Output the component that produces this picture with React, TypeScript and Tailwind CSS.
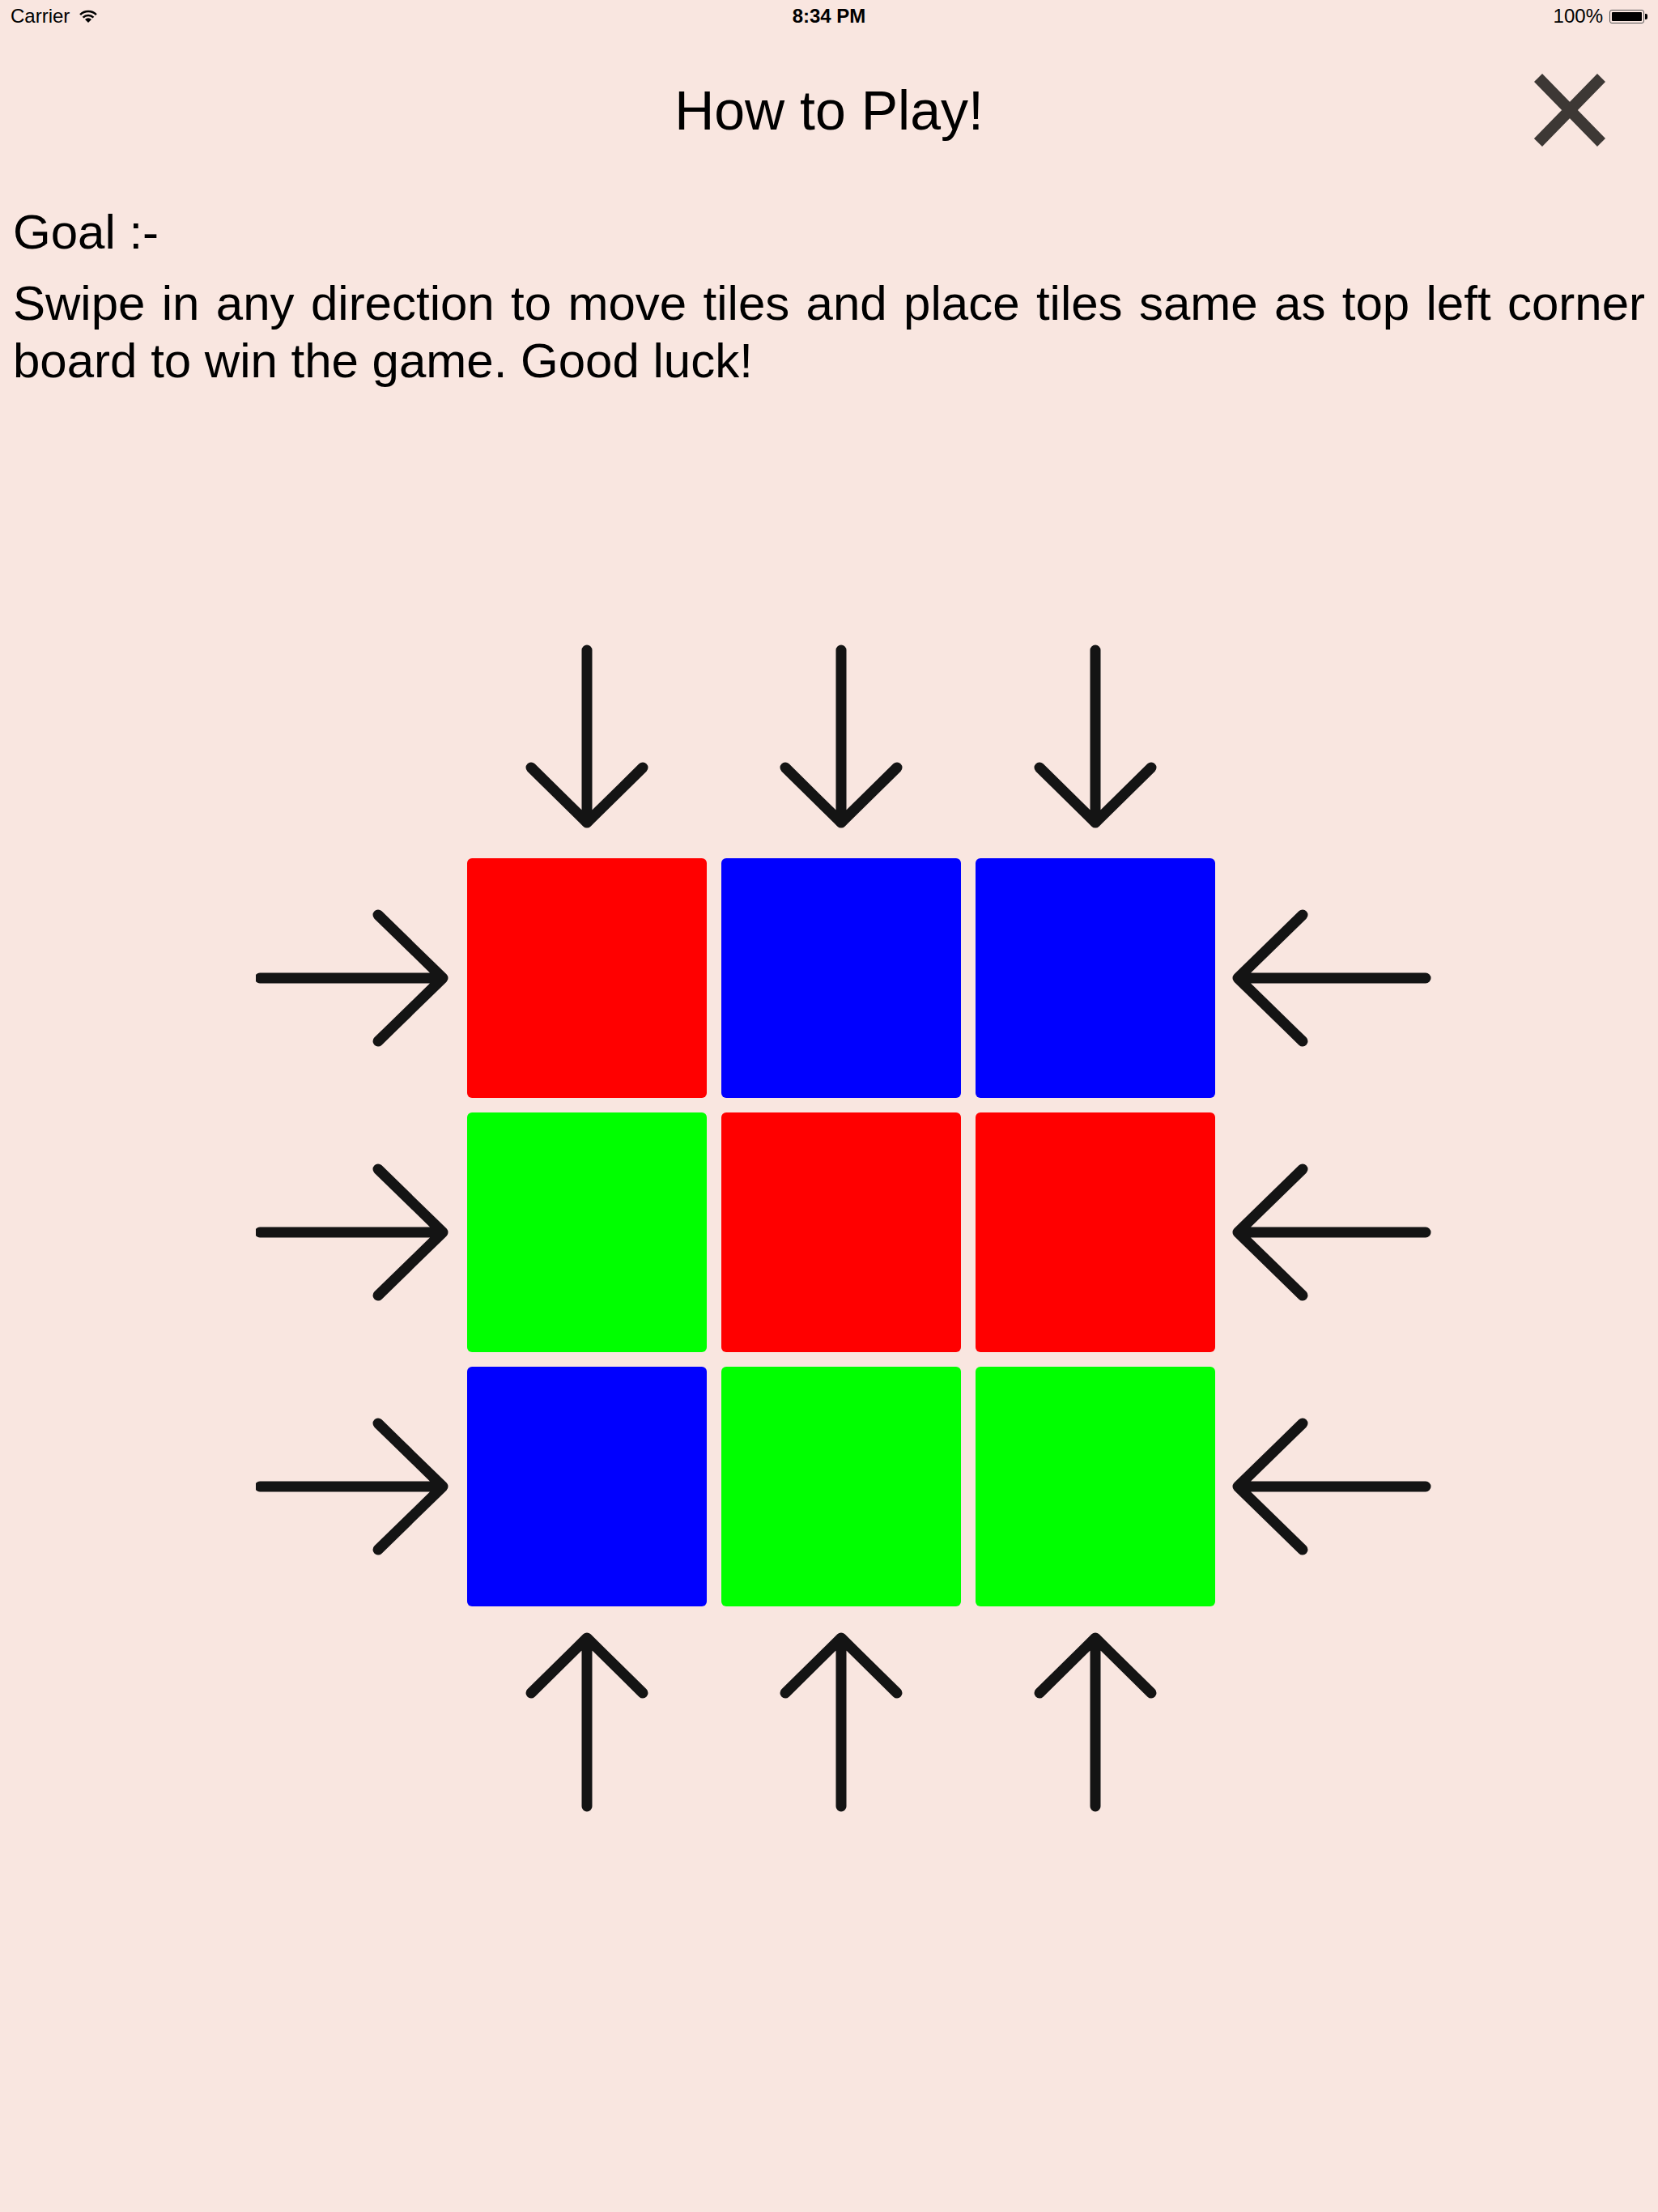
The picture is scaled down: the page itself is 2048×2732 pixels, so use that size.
import React from 'react';

const FONT = { fontFamily: '"Liberation Sans", Arial, Helvetica, sans-serif' };

// tile colours, row by row
const board: string[][] = [
  ['bg-[#ff0000]', 'bg-[#0000ff]', 'bg-[#0000ff]'],
  ['bg-[#00ff00]', 'bg-[#ff0000]', 'bg-[#ff0000]'],
  ['bg-[#0000ff]', 'bg-[#00ff00]', 'bg-[#00ff00]'],
];

function Arrow({ w, h, d }: { w: number; h: number; d: string }) {
  return (
    <svg width={w} height={h} viewBox={`0 0 ${w} ${h}`} fill="none">
      <path d={d} stroke="#141414" strokeWidth={13} strokeLinecap="round" strokeLinejoin="round" />
    </svg>
  );
}

const DownArrow = () => <Arrow w={296} h={246} d="M148 7 V220 M79 152 L148 220 L217 152" />;
const UpArrow = () => <Arrow w={296} h={236} d="M148 229 V21 M79 89 L148 21 L217 89" />;
const RightArrow = () => <Arrow w={243} h={296} d="M5 148 H231 M151 70 L231 148 L151 226" />;
const LeftArrow = () => <Arrow w={250} h={296} d="M242 148 H10 M90 70 L10 148 L90 226" />;

function WifiIcon() {
  return (
    <svg width="26" height="17" viewBox="0 0 26 17" fill="none">
      <path d="M3.1 6.1 A14 14 0 0 1 22.9 6.1" stroke="#000" strokeWidth="2.6" />
      <path d="M6.6 9.6 A9 9 0 0 1 19.4 9.6" stroke="#000" strokeWidth="2.6" />
      <path d="M13 16 L9 12 A5.6 5.6 0 0 1 17 12 Z" fill="#000" />
    </svg>
  );
}

function Battery() {
  return (
    <div className="flex items-center">
      <div className="w-[43px] h-[17px] rounded-[3px] border border-[#555] p-[2px]">
        <div className="w-full h-full rounded-[1px] bg-black" />
      </div>
      <div className="w-[3px] h-[7px] rounded-r-[2px] bg-black ml-[1px]" />
    </div>
  );
}

function CloseIcon() {
  return (
    <svg width="88" height="90" viewBox="0 0 88 90" fill="none">
      <path d="M5 5 L83 85 M83 5 L5 85" stroke="#3d3835" strokeWidth={14} />
    </svg>
  );
}

export default function App() {
  return (
    <div className="min-h-screen w-full bg-[#f9e6e0] text-black" style={FONT}>
      {/* status bar */}
      <div className="grid grid-cols-[1fr_auto_1fr] items-center h-[40px] px-[13px] text-[24px] leading-none">
        <div className="flex items-center gap-[10px]">
          <span>Carrier</span>
          <WifiIcon />
        </div>
        <span className="font-semibold">8:34 PM</span>
        <div className="flex items-center justify-end gap-[8px]">
          <span>100%</span>
          <Battery />
        </div>
      </div>

      {/* header */}
      <div className="grid grid-cols-[1fr_auto_1fr] items-center h-[192px]">
        <div />
        <h1 className="text-[68px] leading-[68px] font-normal">How to Play!</h1>
        <div className="flex justify-end pr-[65px]">
          <CloseIcon />
        </div>
      </div>

      {/* goal text */}
      <div className="px-[16px] mt-[19px] text-[60px] leading-[71px]">
        <p>Goal :-</p>
        <p className="mt-[17px] text-justify">
          Swipe in any direction to move tiles and place tiles same as top left corner board to win the game. Good luck!
        </p>
      </div>

      {/* board with swipe arrows */}
      <div className="mt-[315px] ml-[316px] grid grid-cols-[243px_296px_296px_296px_250px] gap-[18px]">
        <div />
        <DownArrow />
        <DownArrow />
        <DownArrow />
        <div />

        {board.map((row, r) => (
          <React.Fragment key={r}>
            <RightArrow />
            {row.map((color, c) => (
              <div key={c} className={`w-[296px] h-[296px] rounded-[6px] ${color}`} />
            ))}
            <LeftArrow />
          </React.Fragment>
        ))}

        <div />
        <UpArrow />
        <UpArrow />
        <UpArrow />
        <div />
      </div>
    </div>
  );
}
